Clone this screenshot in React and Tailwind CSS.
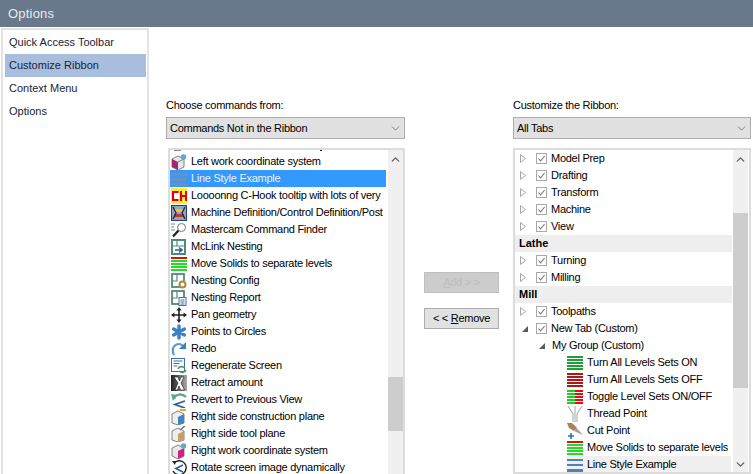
import React from 'react';
import { ChevronUp, ChevronDown } from 'lucide-react';

// small toolbar icons, all on a 16x16 box
const Lines = ({ colors }) => (
  <svg width="16" height="16" viewBox="0 0 16 16">
    {colors.map((c, i) => (
      <rect key={i} x="0" y={1 + i * 3} width="16" height="2" fill={c} />
    ))}
  </svg>
);

const Box = ({ children }) => (
  <svg width="16" height="16" viewBox="0 0 16 16">{children}</svg>
);

const icons = {
  wcsLeft: (
    <Box>
      <path d="M1 5l6-3 6 3v8l-6 3-6-3z" fill="#e8e8e8" stroke="#666" strokeWidth="0.8" />
      <path d="M1 5l6 3v8l-6-3z" fill="#a02a70" />
      <path d="M7 8l6-3" stroke="#666" strokeWidth="0.8" />
      <circle cx="12.5" cy="3" r="2.8" fill="#6fa3c7" />
    </Box>
  ),
  lineBlue: (
    <Box>
      <rect x="0" y="2" width="16" height="3" fill="#6f8fb8" />
      <rect x="0" y="7" width="16" height="3" fill="#6f8fb8" />
      <rect x="0" y="12" width="16" height="3" fill="#6f8fb8" />
    </Box>
  ),
  lineStyle: (
    <Box>
      <rect x="0" y="2" width="16" height="2" fill="#4f81bd" />
      <rect x="0" y="7" width="16" height="2" fill="#4f81bd" />
      <rect x="0" y="12" width="16" height="3" fill="#4f81bd" />
    </Box>
  ),
  chook: (
    <Box>
      <rect x="0" y="0" width="16" height="16" fill="#ffee33" />
      <rect x="3" y="5" width="5" height="6" fill="#ffffff" />
      <path d="M7.500 4H2v8h5.500M10 3v10M15 3v10M10 8h5" fill="none" stroke="#e00000" strokeWidth="2" />
    </Box>
  ),
  machine: (
    <Box>
      <rect x="0.5" y="0.5" width="15" height="15" fill="#8fa6bf" stroke="#2a3f6a" />
      <rect x="3" y="4" width="10" height="3" fill="#f2c230" />
      <rect x="3" y="9" width="10" height="3" fill="#c0392b" />
      <path d="M2 2l3 6-3 6M14 2l-3 6 3 6" fill="none" stroke="#1c2c55" strokeWidth="1.4" />
    </Box>
  ),
  finder: (
    <Box>
      <circle cx="10.5" cy="5.5" r="4" fill="#fff" stroke="#777" />
      <path d="M7.5 8.5L2 14.5" stroke="#222" strokeWidth="2.2" />
      <path d="M0 2h4M0 5h3M0 8h4" stroke="#6b8fb5" />
    </Box>
  ),
  mclink: (
    <Box>
      <rect x="1" y="1" width="13" height="14" fill="#fff" stroke="#4f8a7a" strokeWidth="2" />
      <path d="M6 1v6H1M6 7h8" stroke="#4f8a7a" strokeWidth="1.2" fill="none" />
      <path d="M4 11h6M8 8.5l3 2.5-3 2.5" stroke="#2f5f95" strokeWidth="1.6" fill="none" />
    </Box>
  ),
  moveSolids: <Lines colors={['#e01010', '#22dd22', '#22dd22', '#22dd22', '#22dd22']} />,
  nestConfig: (
    <Box>
      <rect x="1" y="1" width="12" height="13" fill="#fff" stroke="#4f8a7a" strokeWidth="1.8" />
      <path d="M6 1v7H1" stroke="#4f8a7a" strokeWidth="1.2" fill="none" />
      <circle cx="11.5" cy="11.5" r="3" fill="#fff" stroke="#b8862f" strokeWidth="2" />
    </Box>
  ),
  nestReport: (
    <Box>
      <rect x="1" y="1" width="12" height="13" fill="#fff" stroke="#4f8a7a" strokeWidth="1.8" />
      <path d="M6 1v7H1" stroke="#4f8a7a" strokeWidth="1.2" fill="none" />
      <rect x="8" y="7.5" width="7" height="8" fill="#fff" stroke="#3f6fa8" />
      <path d="M9.5 10h4M9.5 12h4M9.5 14h4" stroke="#3f6fa8" />
    </Box>
  ),
  pan: (
    <Box>
      <path d="M8 3v10M3 8h10" stroke="#222" strokeWidth="1.6" />
      <path d="M8 0l2.6 3.4H5.4zM8 16l2.6-3.4H5.4zM0 8l3.4-2.6v5.2zM16 8l-3.4-2.6v5.2z" fill="#222" />
    </Box>
  ),
  points: (
    <Box>
      <g stroke="#3f7fc4" strokeWidth="3.4" strokeLinecap="round">
        <path d="M8 2v12M2.6 5l10.8 6M13.4 5L2.6 11" />
      </g>
    </Box>
  ),
  redo: (
    <Box>
      <path d="M3 14C0 8 3 3 8 3c2 0 3 1 4 2" fill="none" stroke="#5a9bd0" strokeWidth="2.2" />
      <path d="M15 1v7H8z" fill="#3d7fb8" />
    </Box>
  ),
  regen: (
    <Box>
      <rect x="0.5" y="0.5" width="13" height="13" fill="#fff" stroke="#3f6fa8" />
      <path d="M2.5 3h9M2.5 5.5h6M2.5 8h4" stroke="#3f6fa8" />
      <path d="M7 11c1-3 5-3 7-1M15 12c-1 3-5 3-7 1" fill="none" stroke="#4f9a6a" strokeWidth="1.6" />
    </Box>
  ),
  retract: (
    <Box>
      <defs>
        <linearGradient id="retractBg" x1="0" y1="0" x2="1" y2="0">
          <stop offset="0" stopColor="#222" />
          <stop offset="1" stopColor="#aaa" />
        </linearGradient>
      </defs>
      <rect width="16" height="16" fill="url(#retractBg)" />
      <path d="M3 2h4l1.5 4L10 2h3l-3 6 3.5 7h-4L8 11l-1.500 4H4l3-7z" fill="#fff" stroke="#111" strokeWidth="0.6" />
    </Box>
  ),
  revert: (
    <Box>
      <path d="M3 7C4 2 11 1 15 5" fill="none" stroke="#5fa58a" strokeWidth="2.4" />
      <path d="M0 2l6 1-4 6z" fill="#5fa58a" />
      <path d="M14 9L4 12.5 14 16" fill="none" stroke="#2f5f95" strokeWidth="1.8" />
    </Box>
  ),
  rightCons: (
    <Box>
      <path d="M1 5l6-3 6 3v9l-6 2-6-2z" fill="#eee" stroke="#666" strokeWidth="0.8" />
      <path d="M7 8l6-3v9l-6 2z" fill="#3f86c0" />
      <rect x="9" y="0" width="6" height="2" fill="#e6a92f" />
    </Box>
  ),
  rightTool: (
    <Box>
      <path d="M1 5l6-3 6 3v9l-6 2-6-2z" fill="#eee" stroke="#666" strokeWidth="0.8" />
      <path d="M7 8l6-3v9l-6 2z" fill="#c9a063" />
      <path d="M9 4l5-4" stroke="#777" strokeWidth="1.6" />
    </Box>
  ),
  wcsRight: (
    <Box>
      <path d="M1 5l6-3 6 3v8l-6 3-6-3z" fill="#e8e8e8" stroke="#666" strokeWidth="0.8" />
      <path d="M7 8l6-3v8l-6 3z" fill="#d0208a" />
      <circle cx="12.500" cy="3" r="2.8" fill="#6fa3c7" />
    </Box>
  ),
  rotate: (
    <Box>
      <path d="M3 3a7 7 0 1 1-1 8" fill="none" stroke="#222" strokeWidth="1.4" />
      <path d="M1 1l4 0-1 4z" fill="#222" />
      <path d="M12 5L5 8.500 12 12" fill="none" stroke="#2f5f95" strokeWidth="1.8" />
    </Box>
  ),
  levelsOn: <Lines colors={['#1f9e3a', '#1f9e3a', '#1f9e3a', '#1f9e3a', '#1f9e3a']} />,
  levelsOff: <Lines colors={['#b01818', '#b01818', '#b01818', '#b01818', '#b01818']} />,
  toggle: (
    <Box>
      {[1, 4, 7, 10, 13].map((y) => (
        <g key={y}>
          <rect x="0" y={y} width="8" height="2" fill="#22cc22" />
          <rect x="8" y={y} width="8" height="2" fill="#e01010" />
        </g>
      ))}
    </Box>
  ),
  thread: (
    <Box>
      <path d="M1 0l5 8v8M15 0l-5 8v8M8 0v16" fill="none" stroke="#b5b5b5" strokeWidth="1.2" />
    </Box>
  ),
  cutPoint: (
    <Box>
      <path d="M0 0h5l5 5-3 3-5-3z" fill="#a8805a" />
      <path d="M5 0l11 12-9-4 3-3z" fill="#a0a0a0" />
      <path d="M4 10v6M1 13h6" stroke="#2f6fb8" strokeWidth="1.6" />
    </Box>
  ),
};

const commands = [
  ['wcsLeft', 'Left work coordinate system'],
  ['lineBlue', 'Line Style Example', true],
  ['chook', 'Loooonng C-Hook tooltip with lots of very long words in it'],
  ['machine', 'Machine Definition/Control Definition/Post Processor'],
  ['finder', 'Mastercam Command Finder'],
  ['mclink', 'McLink Nesting'],
  ['moveSolids', 'Move Solids to separate levels'],
  ['nestConfig', 'Nesting Config'],
  ['nestReport', 'Nesting Report'],
  ['pan', 'Pan geometry'],
  ['points', 'Points to Circles'],
  ['redo', 'Redo'],
  ['regen', 'Regenerate Screen'],
  ['retract', 'Retract amount'],
  ['revert', 'Revert to Previous View'],
  ['rightCons', 'Right side construction plane'],
  ['rightTool', 'Right side tool plane'],
  ['wcsRight', 'Right work coordinate system'],
  ['rotate', 'Rotate screen image dynamically'],
];

const customItems = [
  ['levelsOn', 'Turn All Levels Sets ON'],
  ['levelsOff', 'Turn All Levels Sets OFF'],
  ['toggle', 'Toggle Level Sets ON/OFF'],
  ['thread', 'Thread Point'],
  ['cutPoint', 'Cut Point'],
  ['moveSolids', 'Move Solids to separate levels'],
  ['lineStyle', 'Line Style Example', true],
];

const Combo = ({ value }) => (
  <div className="h-[22px] flex items-center justify-between bg-[#e1e1e1] border border-[#adadad] pl-[3px] pr-[2px]">
    <span>{value}</span>
    <ChevronDown size={13} strokeWidth={1} className="text-[#333]" />
  </div>
);

const Scrollbar = ({ thumbTop, thumbHeight, down }) => (
  <div className={`w-[15px] shrink-0 bg-[#f0f0f0] flex flex-col items-center ${down ? 'mr-[1px] pb-[1px]' : ''}`}>
    <ChevronUp size={13} strokeWidth={2.5} className="text-[#606060] mt-[3px] shrink-0" />
    <div className="w-full bg-[#cdcdcd] shrink-0" style={{ marginTop: thumbTop, height: thumbHeight }} />
    {down && <ChevronDown size={13} strokeWidth={2.5} className="text-[#606060] mt-auto shrink-0" />}
  </div>
);

const Expander = () => (
  <svg width="6" height="9" viewBox="0 0 6 9" className="shrink-0">
    <path d="M0.5 0.5L5.5 4.5L0.5 8.500Z" fill="#fff" stroke="#a6a6a6" />
  </svg>
);

const Expanded = () => (
  <svg width="6" height="6" viewBox="0 0 6 6" className="shrink-0">
    <path d="M6 0V6H0Z" fill="#595959" />
  </svg>
);

const Check = () => (
  <span className="w-[11px] h-[11px] shrink-0 border border-[#a8a8a8] bg-white flex items-center justify-center">
    <svg width="9" height="9" viewBox="0 0 9 9">
      <path d="M1.5 4.5L3.6 6.800L7.6 2" fill="none" stroke="#7a7a7a" strokeWidth="1.1" />
    </svg>
  </span>
);

const TabRow = ({ label, open }) => (
  <div className="h-[17px] flex items-center pl-[5px]">
    <span className={`w-[16px] flex shrink-0 ${open ? 'pl-[2px]' : ''}`}>{open ? <Expanded /> : <Expander />}</span>
    <Check />
    <span className="ml-[4px] whitespace-nowrap">{label}</span>
  </div>
);

const Header = ({ label }) => (
  <div className="h-[17px] flex items-center pl-[4px] mr-[1px] bg-[#eeeeee] font-bold tracking-normal">{label}</div>
);

export default function App() {
  return (
    <div className="w-[753px] h-[474px] overflow-hidden bg-white text-[11px] leading-[17px] tracking-[-0.27px] text-black font-['Liberation_Sans',sans-serif] flex flex-col">
      <div className="h-[27px] shrink-0 bg-[#6a788c] text-[#e8ebef] text-[13px] tracking-[0.2px] flex items-center pl-[8px]">
        Options
      </div>

      <div className="flex-1 flex min-h-0">
        {/* left nav */}
        <div className="w-[148px] shrink-0 ml-[1px] mt-[1px] border-2 border-b-0 border-[#e3e3e3] pl-[2px] pr-[1px] pt-[1px] text-[#1a2433] tracking-normal">
          {['Quick Access Toolbar', 'Customize Ribbon', 'Context Menu', 'Options'].map((item) => (
            <div
              key={item}
              className={`h-[23px] flex items-center pl-[4px] ${item === 'Customize Ribbon' ? 'bg-[#a9bedf]' : ''}`}
            >
              {item}
            </div>
          ))}
        </div>

        {/* commands column */}
        <div className="w-[239px] shrink-0 ml-[17px] pt-[70px] flex flex-col min-h-0">
          <div className="h-[20px]">Choose commands from:</div>
          <Combo value="Commands Not in the Ribbon" />
          <div className="mt-[9px] ml-[2px] flex-1 min-h-0 border-2 border-b-0 border-[#dcdcdc] flex overflow-hidden">
            <div className="flex-1 min-w-0 overflow-hidden">
              {/* bottom edge of the row scrolled out above */}
              <div className="h-[3px] flex items-start">
                <span className="ml-[4px] w-[7px] h-[1px] bg-[#888]" />
                <span className="ml-[139px] w-[2px] h-[1px] bg-[#222]" />
              </div>
              {commands.map(([icon, label, selected]) => (
                <div
                  key={label}
                  className={`h-[17px] mr-[2px] flex items-center whitespace-nowrap overflow-hidden pr-[3px] ${selected ? 'bg-[#3399ff] text-[#e8f2ff]' : ''}`}
                >
                  <span className="w-[21px] pl-[1px] shrink-0 flex">{icons[icon]}</span>
                  <span className="flex-1 min-w-0 overflow-hidden">{label}</span>
                </div>
              ))}
            </div>
            <Scrollbar thumbTop={211} thumbHeight={54} />
          </div>
        </div>

        {/* add / remove */}
        <div className="w-[108px] shrink-0 flex flex-col items-center pt-[245px] pl-[5px]">
          <div className="w-[75px] h-[21px] flex items-center justify-center bg-[#cccccc] border border-[#bfbfbf] text-[#bdbdbd]">
            <span><span className="underline">A</span>dd &gt; &gt;</span>
          </div>
          <div className="mt-[15px] w-[75px] h-[21px] flex items-center justify-center bg-[#e1e1e1] border border-[#adadad]">
            <span>&lt; &lt; <span className="underline">R</span>emove</span>
          </div>
        </div>

        {/* ribbon column */}
        <div className="w-[238px] shrink-0 pt-[70px] flex flex-col min-h-0">
          <div className="h-[20px]">Customize the Ribbon:</div>
          <Combo value="All Tabs" />
          <div className="mt-[9px] flex-1 min-h-0 border-2 border-[#dcdcdc] flex overflow-hidden">
            <div className="flex-1 min-w-0 overflow-hidden">
              {['Model Prep', 'Drafting', 'Transform', 'Machine', 'View'].map((t) => (
                <TabRow key={t} label={t} />
              ))}
              <Header label="Lathe" />
              <TabRow label="Turning" />
              <TabRow label="Milling" />
              <Header label="Mill" />
              <TabRow label="Toolpaths" />
              <TabRow label="New Tab (Custom)" open />
              <div className="h-[17px] flex items-center pl-[24px]">
                <Expanded />
                <span className="ml-[7px] whitespace-nowrap">My Group (Custom)</span>
              </div>
              {customItems.map(([icon, label, hover]) => (
                <div key={label} className="h-[17px] flex items-center pl-[52px] pr-[2px] overflow-hidden">
                  <div className={`flex-1 min-w-0 h-full flex items-center pr-[3px] overflow-hidden whitespace-nowrap ${hover ? 'bg-[#f0f0f0]' : ''}`}>
                    <span className="w-[20px] shrink-0 flex">{icons[icon]}</span>
                    <span className="flex-1 min-w-0 overflow-hidden">{label}</span>
                  </div>
                </div>
              ))}
            </div>
            <Scrollbar thumbTop={47} thumbHeight={175} down />
          </div>
        </div>
      </div>
    </div>
  );
}
